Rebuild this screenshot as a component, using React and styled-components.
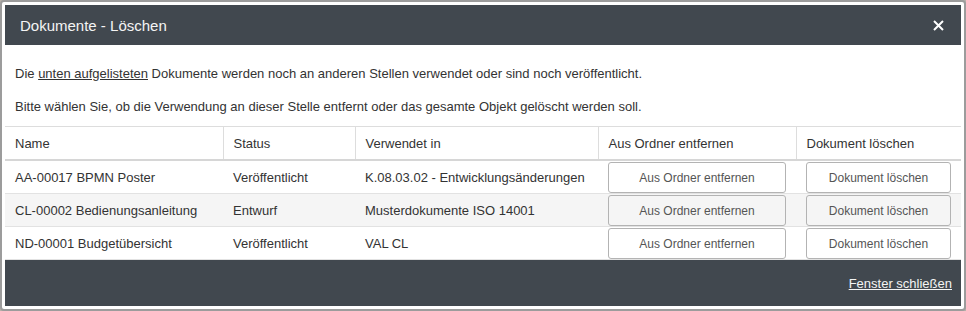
import styled, { createGlobalStyle } from "styled-components";

const GlobalStyle = createGlobalStyle`
  html, body {
    margin: 0;
    padding: 0;
    background: #b9b2ab;
  }
  body {
    font-family: "Liberation Sans", Arial, sans-serif;
  }
`;

const documents = [
  { name: "AA-00017 BPMN Poster", status: "Veröffentlicht", usedIn: "K.08.03.02 - Entwicklungsänderungen" },
  { name: "CL-00002 Bedienungsanleitung", status: "Entwurf", usedIn: "Musterdokumente ISO 14001" },
  { name: "ND-00001 Budgetübersicht", status: "Veröffentlicht", usedIn: "VAL CL" },
];

export default function App() {
  return (
    <>
      <GlobalStyle />
      <Dialog>
        <Header>
          <Title>Dokumente - Löschen</Title>
          <CloseButton aria-label="Schließen">
            <svg width="11" height="11" viewBox="0 0 11 11">
              <path d="M1 1 L10 10 M10 1 L1 10" stroke="#fff" strokeWidth="2" />
            </svg>
          </CloseButton>
        </Header>

        <Body>
          <Text>
            Die <Underlined>unten aufgelisteten</Underlined> Dokumente werden noch an anderen Stellen
            verwendet oder sind noch veröffentlicht.
          </Text>
          <Text>
            Bitte wählen Sie, ob die Verwendung an dieser Stelle entfernt oder das gesamte Objekt
            gelöscht werden soll.
          </Text>
        </Body>

        <Table>
          <colgroup>
            <col style={{ width: 218 }} />
            <col style={{ width: 132 }} />
            <col style={{ width: 243 }} />
            <col style={{ width: 198 }} />
            <col style={{ width: 165 }} />
          </colgroup>
          <thead>
            <tr>
              <Th>Name</Th>
              <Th>Status</Th>
              <Th>Verwendet in</Th>
              <Th>Aus Ordner entfernen</Th>
              <Th>Dokument löschen</Th>
            </tr>
          </thead>
          <tbody>
            {documents.map((doc, i) => (
              <Row key={doc.name} $striped={i % 2 === 1}>
                <Td>{doc.name}</Td>
                <Td>{doc.status}</Td>
                <Td>{doc.usedIn}</Td>
                <ButtonCell>
                  <ActionButton>Aus Ordner entfernen</ActionButton>
                </ButtonCell>
                <ButtonCell>
                  <ActionButton>Dokument löschen</ActionButton>
                </ButtonCell>
              </Row>
            ))}
          </tbody>
        </Table>

        <Footer>
          <FooterLink href="#">Fenster schließen</FooterLink>
        </Footer>
      </Dialog>
    </>
  );
}

const Dialog = styled.div`
  box-sizing: border-box;
  width: 966px;
  height: 311px;
  padding: 3px;
  border: 2px solid #9c9c9c;
  border-radius: 4px;
  background: #fff;
  display: flex;
  flex-direction: column;
  color: #333;
`;

const Header = styled.div`
  display: flex;
  align-items: center;
  justify-content: space-between;
  height: 40px;
  padding: 0 17px 0 15px;
  background: #41484f;
`;

const Title = styled.h1`
  margin: 0;
  font-size: 15px;
  font-weight: normal;
  color: #f4f4f4;
`;

const CloseButton = styled.button`
  display: flex;
  padding: 0;
  border: 0;
  background: none;
  cursor: pointer;
`;

const Body = styled.div`
  padding: 20px 10px 0;
`;

const Text = styled.p`
  margin: 0 0 15px;
  font-size: 13px;
  line-height: 18px;

  &:last-child {
    margin-bottom: 10px;
  }
`;

const Underlined = styled.span`
  text-decoration: underline;
`;

const Table = styled.table`
  width: 956px;
  table-layout: fixed;
  border-collapse: collapse;
  font-size: 13px;
  border-top: 1px solid #ddd;
`;

const Th = styled.th`
  height: 32px;
  padding: 0 10px;
  text-align: left;
  font-weight: normal;
  border-left: 1px solid #ddd;
  border-bottom: 2px solid #d6d6d6;

  &:first-child {
    border-left: 0;
  }
`;

const Row = styled.tr`
  background: ${(props) => (props.$striped ? "#f5f5f5" : "#fff")};
  border-bottom: 1px solid #e2e2e2;
`;

const Td = styled.td`
  height: 32px;
  padding: 0 10px;
  white-space: nowrap;
`;

const ButtonCell = styled.td`
  padding: 1px 10px 0;
  vertical-align: top;
`;

const ActionButton = styled.button`
  display: block;
  width: 100%;
  height: 31px;
  padding: 0 8px;
  border: 1px solid #b3b3b3;
  border-radius: 3px;
  background: transparent;
  color: #555;
  font-family: inherit;
  font-size: 12px;
  cursor: pointer;
`;

const Footer = styled.div`
  flex: 1;
  display: flex;
  align-items: center;
  justify-content: flex-end;
  padding: 0 9px;
  background: #41484f;
`;

const FooterLink = styled.a`
  color: #f4f4f4;
  font-size: 13px;
  text-decoration: underline;
`;
